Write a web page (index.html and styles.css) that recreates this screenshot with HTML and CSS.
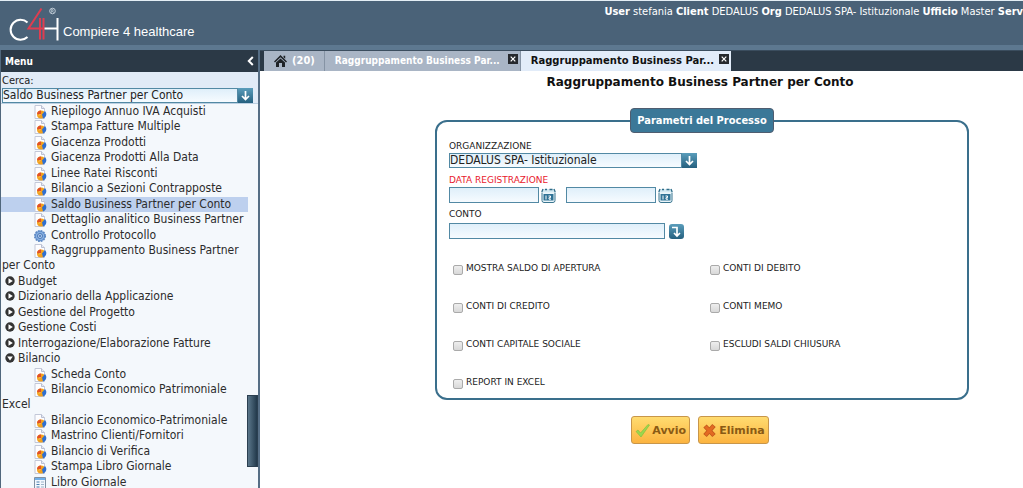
FILE: index.html
```html
<!DOCTYPE html>
<html lang="it">
<head>
<meta charset="utf-8">
<title>Compiere 4 healthcare</title>
<link rel="stylesheet" href="styles.css">
</head>
<body>
<svg class="defs" aria-hidden="true">
  <defs>
    <linearGradient id="teal" x1="0" y1="0" x2="0" y2="1"><stop offset="0" stop-color="#5a9dbb"/><stop offset="1" stop-color="#25607f"/></linearGradient>
    <symbol id="report" viewBox="0 0 14 14">
      <path d="M2 .5h6.500l3 3v10H2z" fill="#fdfdff" stroke="#c3c8d8"/>
      <path d="M8.500.5v3h3" fill="#e6e9f3" stroke="#b9bfd2"/>
      <circle cx="8" cy="9.500" r="4" fill="#f2a11c"/>
      <path d="M8 9.500V5.500a4 4 0 0 0-4 3.500z" fill="#e2502a"/>
      <path d="M9 9.500l3-3.500a4.500 4.500 0 0 1-2 7.500z" fill="#2f6fd0"/>
      <path d="M6 10.500l1.500-1.500" stroke="#ffd97a"/>
    </symbol>
    <symbol id="gear" viewBox="0 0 14 14">
      <circle cx="7" cy="7" r="4.800" fill="#86afe0" stroke="#5a8aca" stroke-width="1"/>
      <circle cx="7" cy="7" r="5.300" fill="none" stroke="#5a86c2" stroke-width="1.500" stroke-dasharray="1.700 1.075"/>
      <circle cx="7" cy="7" r="2.500" fill="#b5cdec" stroke="#4a78b8"/>
      <circle cx="7" cy="7" r="1" fill="#3c6fb5"/>
    </symbol>
    <symbol id="form" viewBox="0 0 14 14">
      <path d="M1.500 1.500h11v12h-11z" fill="#f2f7fd" stroke="#8091a3"/>
      <path d="M2 2h10v2H2z" fill="#6fb0ea"/>
      <path d="M3.500 6h3M3.500 8.500h3M3.500 11h3" stroke="#4b7fae"/>
      <path d="M8 6h3M8 8.500h3M8 11h3" stroke="#9fb6c9"/>
    </symbol>
    <symbol id="closed" viewBox="0 0 10 10">
      <circle cx="5" cy="5" r="4.700" fill="#333"/><path d="M3.500 2.200L7.800 5 3.500 7.800z" fill="#fff"/>
    </symbol>
    <symbol id="open" viewBox="0 0 10 10">
      <circle cx="5" cy="5" r="4.700" fill="#333"/><path d="M2.200 3.500h5.600L5 7.600z" fill="#fff"/>
    </symbol>
    <symbol id="down" viewBox="0 0 15 15">
      <path d="M0 0h15v15H0z" fill="url(#teal)"/><path d="M7.500 3v8M4 8l3.500 3.500L11 8" fill="none" stroke="#fff" stroke-width="1.700"/>
    </symbol>
    <symbol id="calendar" viewBox="0 0 15 15">
      <path d="M1 4.500v8q0 2 2 2h9q2 0 2-2v-8" fill="#eaf5fa" stroke="#39758f"/>
      <path d="M.5 4.500L2 1h11l1.500 3.500z" fill="#d3e9f2"/>
      <path d="M.8 4L2 1M14.200 4L13 1M4 1.500h2M8.500 1.500h3" stroke="#2f6c88" stroke-width="1.300"/>
      <path d="M2.500 6h10v6.500h-10z" fill="#2f7295"/>
      <path d="M5 7.500v4M7.500 8h2v1.700h-1.500v1.500h2" fill="none" stroke="#fff" stroke-width="1"/>
    </symbol>
    <symbol id="close" viewBox="0 0 10 10">
      <path d="M0 0h10v10H0z" fill="#26292d"/><path d="M2.700 2.700l4.600 4.600M7.300 2.700L2.700 7.300" stroke="#fff" stroke-width="1.200"/>
    </symbol>
  </defs>
</svg>

<header class="top">
  <div class="brand">
    <svg class="logo" viewBox="0 0 52 36" role="img" aria-label="C4H">
      <path d="M18.500 15.500a10 10 0 1 0 0 14.500" fill="none" stroke="#fff" stroke-width="2"/>
      <path d="M32.500 1.500L19.500 21.500H34M31 11v21.500M34.500 11v21.500" fill="none" stroke="#df3d50" stroke-width="2"/>
      <path d="M35.500 21.500H48M48.500 11v22.500" fill="none" stroke="#fff" stroke-width="2"/>
      <circle cx="43.500" cy="4" r="2.800" fill="none" stroke="#dce5ec" stroke-width=".8"/>
      <path d="M42.600 5.700V2.500h1.200q1 .8 0 1.600h-1M43.600 4.100l1 1.600" fill="none" stroke="#dce5ec" stroke-width=".6"/>
    </svg>
    <span class="product">Compiere 4 healthcare</span>
  </div>
  <div class="session"><b>User</b> stefania <b>Client</b> DEDALUS <b>Org</b> DEDALUS SPA- Istituzionale <b>Ufficio</b> Master <b>Serv</b></div>
</header>

<div class="work">
  <aside class="side">
    <div class="side-head"><span>Menu</span>
      <button class="plain" aria-label="Comprimi menu"><svg width="7" height="10" viewBox="0 0 7 10"><path d="M5.800 1L1.800 5l4 4" fill="none" stroke="#fff" stroke-width="2"/></svg></button>
    </div>
    <div class="search">
      <label for="cerca">Cerca:</label>
      <div class="combo">
        <select id="cerca"><option>Saldo Business Partner per Conto</option></select>
        <svg class="i15"><use href="#down"/></svg>
      </div>
    </div>
    <ul class="tree">
      <li class="leaf"><svg><use href="#report"/></svg>Riepilogo Annuo IVA Acquisti</li>
      <li class="leaf"><svg><use href="#report"/></svg>Stampa Fatture Multiple</li>
      <li class="leaf"><svg><use href="#report"/></svg>Giacenza Prodotti</li>
      <li class="leaf"><svg><use href="#report"/></svg>Giacenza Prodotti Alla Data</li>
      <li class="leaf"><svg><use href="#report"/></svg>Linee Ratei Risconti</li>
      <li class="leaf"><svg><use href="#report"/></svg>Bilancio a Sezioni Contrapposte</li>
      <li class="leaf selected"><svg><use href="#report"/></svg>Saldo Business Partner per Conto</li>
      <li class="leaf"><svg><use href="#report"/></svg>Dettaglio analitico Business Partner</li>
      <li class="leaf"><svg><use href="#gear"/></svg>Controllo Protocollo</li>
      <li class="leaf"><svg><use href="#report"/></svg>Raggruppamento Business Partner<br>per Conto</li>
      <li class="folder"><svg><use href="#closed"/></svg>Budget</li>
      <li class="folder"><svg><use href="#closed"/></svg>Dizionario della Applicazione</li>
      <li class="folder"><svg><use href="#closed"/></svg>Gestione del Progetto</li>
      <li class="folder"><svg><use href="#closed"/></svg>Gestione Costi</li>
      <li class="folder"><svg><use href="#closed"/></svg>Interrogazione/Elaborazione Fatture</li>
      <li class="folder"><svg><use href="#open"/></svg>Bilancio</li>
      <li class="leaf"><svg><use href="#report"/></svg>Scheda Conto</li>
      <li class="leaf"><svg><use href="#report"/></svg>Bilancio Economico Patrimoniale<br>Excel</li>
      <li class="leaf"><svg><use href="#report"/></svg>Bilancio Economico-Patrimoniale</li>
      <li class="leaf"><svg><use href="#report"/></svg>Mastrino Clienti/Fornitori</li>
      <li class="leaf"><svg><use href="#report"/></svg>Bilancio di Verifica</li>
      <li class="leaf"><svg><use href="#report"/></svg>Stampa Libro Giornale</li>
      <li class="leaf"><svg><use href="#form"/></svg>Libro Giornale</li>
    </ul>
    <div class="thumb"></div>
  </aside>

  <main class="main">
    <nav class="tabs">
      <div class="tab home">
        <svg width="13" height="12" viewBox="0 0 13 12"><path d="M6.500 0L13 6.500l-1 1L6.500 2.300 1 7.500l-1-1zM2 7.600l4.500-4.200L11 7.600V12H8V8H5v4H2zM9.500.8h1.700v3L9.500 2.200z" fill="#1f2327"/></svg>
        <span>(20)</span>
      </div>
      <div class="tab idle"><span>Raggruppamento Business Par...</span><button class="plain" aria-label="Chiudi"><svg class="x"><use href="#close"/></svg></button></div>
      <div class="tab active"><span>Raggruppamento Business Par...</span><button class="plain" aria-label="Chiudi"><svg class="x"><use href="#close"/></svg></button></div>
    </nav>
    <form class="process">
      <h1>Raggruppamento Business Partner per Conto</h1>
      <fieldset>
        <legend>Parametri del Processo</legend>
        <label class="caption" for="org">ORGANIZZAZIONE</label>
        <div class="combo org">
          <select id="org"><option>DEDALUS SPA- Istituzionale</option></select>
          <svg class="i15"><use href="#down"/></svg>
        </div>
        <label class="caption required" for="from">DATA REGISTRAZIONE</label>
        <div class="dates">
          <div class="date"><input id="from" type="text"><button type="button" class="plain" aria-label="Calendario"><svg class="i15"><use href="#calendar"/></svg></button></div>
          <div class="date"><input type="text" aria-label="Data registrazione, fine"><button type="button" class="plain" aria-label="Calendario"><svg class="i15"><use href="#calendar"/></svg></button></div>
        </div>
        <label class="caption" for="conto">CONTO</label>
        <div class="account"><input id="conto" type="text"><button type="button" class="plain" aria-label="Cerca conto"><svg class="i15" viewBox="0 0 15 15"><rect width="15" height="15" rx="3" fill="url(#teal)"/><path d="M3 3.500h5v8M5 9l3 3 3-3" fill="none" stroke="#fff" stroke-width="1.700"/></svg></button></div>
        <div class="checks">
          <label><input type="checkbox"><span>MOSTRA SALDO DI APERTURA</span></label>
          <label><input type="checkbox"><span>CONTI DI DEBITO</span></label>
          <label><input type="checkbox"><span>CONTI DI CREDITO</span></label>
          <label><input type="checkbox"><span>CONTI MEMO</span></label>
          <label><input type="checkbox"><span>CONTI CAPITALE SOCIALE</span></label>
          <label><input type="checkbox"><span>ESCLUDI SALDI CHIUSURA</span></label>
          <label><input type="checkbox"><span>REPORT IN EXCEL</span></label>
        </div>
      </fieldset>
      <div class="actions">
        <button type="button" class="action"><svg width="15" height="15" viewBox="0 0 15 15"><path d="M1 8.500l2-1.500 2.500 3L13 1.500l1.500.500L6 14z" fill="#9bd84e" stroke="#7fbb3c" stroke-width=".6"/></svg>Avvio</button>
        <button type="button" class="action"><svg width="15" height="15" viewBox="0 0 15 15"><path d="M3 3l9 9.500M12 2.500l-9 10" stroke="#c25a1e" stroke-width="4.600"/><path d="M3.500 3.500l8 8.500M11.500 3l-8 9" stroke="#e36a22" stroke-width="3"/></svg>Elimina</button>
      </div>
    </form>
  </main>
</div>
</body>
</html>
```
FILE: styles.css
```css
* { box-sizing: border-box; }
body {
  margin: 0;
  height: 100vh;
  display: flex;
  flex-direction: column;
  overflow: hidden;
  background: #fff;
  color: #222;
  font: 12px/15px "DejaVu Sans Condensed", "DejaVu Sans", sans-serif;
}
.defs { position: absolute; width: 0; height: 0; }
svg { display: block; flex: none; }
.i15 { width: 15px; height: 15px; }
.plain { display: block; border: 0; padding: 0; background: none; }

/* header */
.top {
  display: flex;
  flex: none;
  justify-content: space-between;
  height: 50px;
  overflow: hidden;
  border-top: 1px solid #e4eef5;
  border-bottom: 5px solid #5d7890;
  background: #4a6278;
  color: #fff;
}
.brand { display: flex; flex: none; padding: 6px 0 0 9px; }
.logo { width: 52px; height: 36px; }
.product { margin: 17px 0 0 2px; font: 13px/15px "Liberation Sans", sans-serif; }
.session { flex: none; padding-top: 3px; font-size: 11px; white-space: nowrap; }

/* side menu */
.work { display: flex; flex: 1; min-height: 0; }
.side {
  position: relative;
  flex: none;
  display: flex;
  flex-direction: column;
  width: 260px;
  overflow: hidden;
  border-left: 1px solid #50677c;
  border-right: 2px solid #566e85;
  background: #f4f8fc;
}
.side-head {
  display: flex;
  flex: none;
  justify-content: space-between;
  align-items: center;
  height: 22px;
  padding: 0 4px;
  background: #2b3946;
  color: #fff;
  font-size: 10px;
  font-weight: bold;
}
.search { flex: none; padding: 1px 5px 0 1px; border-bottom: 1px solid #bcd0e2; background: #e1ebf7; }
.search label { display: block; font-size: 11px; }
.combo { display: flex; }
select, input[type="text"] {
  min-width: 0;
  height: 16px;
  margin: 0;
  padding: 0;
  border: 1px solid #5289a4;
  border-radius: 0;
  background: linear-gradient(#dfeffa, #f6fbff);
  color: #222;
  font: inherit;
  line-height: 14px;
}
select { flex: 1; appearance: none; }
.combo select { height: 15px; line-height: 13px; }
.tree { flex: 1; margin: 0; padding: 0; list-style: none; }
.tree li { padding-left: 1px; margin-right: 10px; color: #2c2c2c; white-space: nowrap; }
.tree li:nth-child(even) { margin-bottom: 1px; }
.tree svg { display: inline-block; vertical-align: top; }
.leaf svg { width: 14px; height: 14px; margin: 1px 4px 0 31px; }
.folder svg { width: 10px; height: 10px; margin: 2px 3px 0 3px; }
.tree .selected { background: #bdd0ee; }
.thumb {
  position: absolute;
  right: 0;
  bottom: 21px;
  width: 11px;
  height: 72px;
  border: 1px solid #2b3f50;
  background: linear-gradient(90deg, #5a768a, #22394b);
}

/* main area */
.main { flex: 1; min-width: 0; overflow: hidden; }
.tabs { display: flex; height: 21px; padding-left: 4px; border-top: 1px solid #3b4d5e; background: #2b3946; }
.tab {
  display: flex;
  flex: none;
  gap: 5px;
  padding: 2px 2px 0 10px;
  border-right: 1px solid #8593a4;
  background: #a9b5c5;
  color: #fff;
  font-size: 11px;
  font-weight: bold;
}
.home { padding-right: 9px; }
.home svg { margin-top: 2px; }
.idle { gap: 8px; font-size: 10px; }
.x { width: 10px; height: 10px; }
.active { border-right: 0; background: #e2ecf9; color: #111; font-size: 10px; font-family: "DejaVu Sans", sans-serif; }
.idle .plain, .active .plain { align-self: flex-start; margin: 1px 0 0; }
.process { max-width: 709px; padding: 4px 0 0 175px; }
h1 { margin: 0 4px 18px 0; font: bold 12px/15px "DejaVu Sans", sans-serif; text-align: center; color: #111; }
fieldset {
  min-width: 0;
  margin: 0;
  padding: 6px 12px 9px;
  border: 2px solid #3a6f8c;
  border-radius: 12px;
}
legend {
  margin: 0 auto;
  padding: 4px 6px;
  border: 1px solid #4f5d70;
  border-radius: 4px;
  background: #3b7898;
  color: #fff;
  font-size: 11px;
  font-weight: bold;
}
.caption { display: block; font-family: "DejaVu Sans", sans-serif; font-size: 9px; line-height: 14px; }
.required { margin-top: 5px; color: #e8192c; }
.org { width: 248px; }
.dates { display: flex; gap: 10px; margin-bottom: 4px; }
.date { display: flex; gap: 2px; }
.date input { width: 90px; }
.account { display: flex; gap: 4px; margin-top: 2px; }
.account input { width: 216px; }
.checks { display: grid; grid-template-columns: 257px 1fr; row-gap: 25px; padding: 23px 0 0 4px; }
.checks label { display: flex; gap: 3px; font-family: "DejaVu Sans", sans-serif; font-size: 9px; line-height: 12px; }
.checks input {
  appearance: none;
  width: 10px;
  height: 10px;
  margin: 3px 0 0;
  border: 1px solid #aaa;
  border-radius: 2px;
  background: linear-gradient(#eee, #d8d8d8);
}
.actions { display: flex; justify-content: center; gap: 8px; margin: 16px 4px 0 0; }
.action {
  display: flex;
  align-items: center;
  gap: 2px;
  height: 28px;
  padding: 0 3px;
  border: 1px solid #c8964a;
  border-radius: 3px;
  background: linear-gradient(#ffdc70, #fcb440);
  color: #8a5a14;
  font: bold 11px/15px "DejaVu Sans", sans-serif;
}
```
